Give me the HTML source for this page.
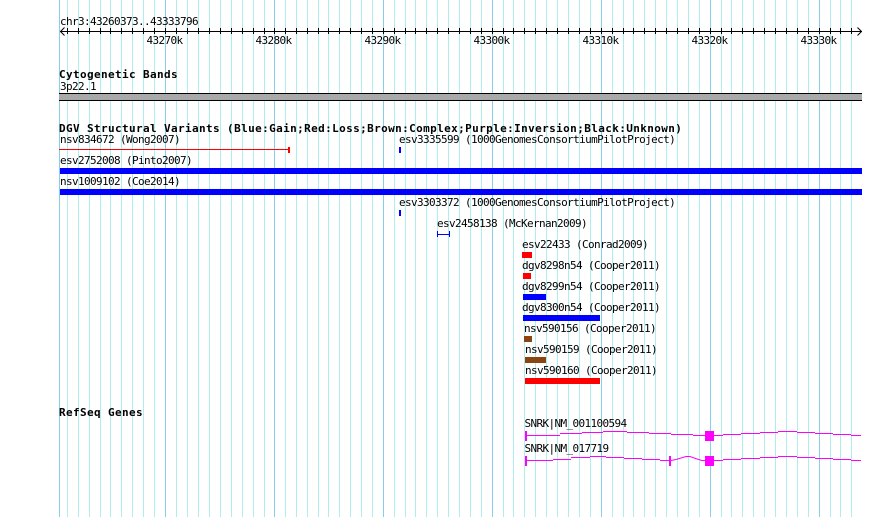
<!DOCTYPE html>
<html><head><meta charset="utf-8"><title>GBrowse</title>
<style>
html,body{margin:0;padding:0;background:#fff;width:890px;height:517px;overflow:hidden}
svg{display:block}
text{font-family:"DejaVu Sans Mono","Liberation Mono",monospace;font-size:11px;letter-spacing:-0.62px;fill:#000;white-space:pre}
text.b{font-weight:bold;letter-spacing:0.38px}
</style></head><body>
<svg width="890" height="517" viewBox="0 0 890 517" xmlns="http://www.w3.org/2000/svg">
<g shape-rendering="crispEdges" fill="none">
<path stroke="#afeeee" d="M67.5 0V517M78.5 0V517M89.5 0V517M100.5 0V517M110.5 0V517M121.5 0V517M132.5 0V517M143.5 0V517M154.5 0V517M176.5 0V517M187.5 0V517M198.5 0V517M209.5 0V517M220.5 0V517M231.5 0V517M242.5 0V517M253.5 0V517M264.5 0V517M285.5 0V517M296.5 0V517M307.5 0V517M318.5 0V517M328.5 0V517M339.5 0V517M350.5 0V517M361.5 0V517M372.5 0V517M394.5 0V517M405.5 0V517M415.5 0V517M426.5 0V517M437.5 0V517M448.5 0V517M459.5 0V517M470.5 0V517M481.5 0V517M503.5 0V517M513.5 0V517M524.5 0V517M535.5 0V517M546.5 0V517M557.5 0V517M568.5 0V517M579.5 0V517M590.5 0V517M612.5 0V517M623.5 0V517M633.5 0V517M644.5 0V517M655.5 0V517M666.5 0V517M677.5 0V517M688.5 0V517M699.5 0V517M721.5 0V517M731.5 0V517M742.5 0V517M753.5 0V517M764.5 0V517M775.5 0V517M786.5 0V517M797.5 0V517M808.5 0V517M830.5 0V517M840.5 0V517M851.5 0V517"/>
<path stroke="#87ceeb" d="M59.5 0V517M165.5 0V517M274.5 0V517M383.5 0V517M492.5 0V517M601.5 0V517M710.5 0V517M819.5 0V517"/>
<!-- ruler -->
<path stroke="#000" d="M60 31.5H862M67.5 28V34M78.5 28V34M89.5 28V34M100.5 28V34M110.5 28V34M121.5 28V34M132.5 28V34M143.5 28V34M154.5 28V34M165.5 28V34M176.5 28V34M187.5 28V34M198.5 28V34M209.5 28V34M220.5 28V34M231.5 28V34M242.5 28V34M253.5 28V34M264.5 28V34M274.5 28V34M285.5 28V34M296.5 28V34M307.5 28V34M318.5 28V34M328.5 28V34M339.5 28V34M350.5 28V34M361.5 28V34M372.5 28V34M383.5 28V34M394.5 28V34M405.5 28V34M415.5 28V34M426.5 28V34M437.5 28V34M448.5 28V34M459.5 28V34M470.5 28V34M481.5 28V34M492.5 28V34M503.5 28V34M513.5 28V34M524.5 28V34M535.5 28V34M546.5 28V34M557.5 28V34M568.5 28V34M579.5 28V34M590.5 28V34M601.5 28V34M612.5 28V34M623.5 28V34M633.5 28V34M644.5 28V34M655.5 28V34M666.5 28V34M677.5 28V34M688.5 28V34M699.5 28V34M710.5 28V34M721.5 28V34M731.5 28V34M742.5 28V34M753.5 28V34M764.5 28V34M775.5 28V34M786.5 28V34M797.5 28V34M808.5 28V34M819.5 28V34M830.5 28V34M840.5 28V34M851.5 28V34"/>
<path stroke="#000" shape-rendering="auto" d="M60.5 31.5L64.5 27.5M60.5 31.5L64.5 35.5M861.5 31.5L857.5 27.5M861.5 31.5L857.5 35.5"/>
</g>
<g shape-rendering="crispEdges">
<!-- cytoband -->
<rect x="59" y="93" width="803" height="8" fill="#a9a9a9"/>
<rect x="59" y="93" width="803" height="1" fill="#000"/>
<rect x="59" y="100" width="803" height="1" fill="#000"/>
<!-- variants -->
<rect x="59" y="149" width="230" height="1" fill="#f00"/>
<rect x="288" y="147" width="2" height="6" fill="#f00"/>
<rect x="399" y="147" width="2" height="6" fill="#00f"/>
<rect x="60" y="168" width="802" height="6" fill="#00f"/>
<rect x="60" y="189" width="802" height="6" fill="#00f"/>
<rect x="399" y="210" width="2" height="6" fill="#00f"/>
<rect x="437" y="231" width="1" height="6" fill="#00f"/>
<rect x="449" y="231" width="1" height="6" fill="#00f"/>
<rect x="437" y="234" width="13" height="1" fill="#00f"/>
<rect x="522" y="252" width="10" height="6" fill="#f00"/>
<rect x="523" y="273" width="8" height="6" fill="#f00"/>
<rect x="523" y="294" width="23" height="6" fill="#00f"/>
<rect x="523" y="315" width="77" height="6" fill="#00f"/>
<rect x="524" y="336" width="8" height="6" fill="#8b4513"/>
<rect x="525" y="357" width="21" height="6" fill="#8b4513"/>
<rect x="525" y="378" width="75" height="6" fill="#f00"/>
<!-- genes -->
<g fill="#f0f">
<rect x="525" y="431" width="2" height="10"/>
<rect x="705" y="431" width="9" height="10"/>
<rect x="527" y="435" width="33" height="1"/><rect x="560" y="433" width="22" height="1"/><rect x="582" y="432" width="21" height="1"/><rect x="603" y="431" width="24" height="1"/><rect x="627" y="432" width="22" height="1"/><rect x="649" y="433" width="22" height="1"/><rect x="671" y="434" width="22" height="1"/><rect x="693" y="435" width="12" height="1"/>
<rect x="714" y="435" width="9" height="1"/><rect x="723" y="434" width="18" height="1"/><rect x="741" y="433" width="19" height="1"/><rect x="760" y="432" width="18" height="1"/><rect x="778" y="431" width="19" height="1"/><rect x="797" y="432" width="18" height="1"/><rect x="815" y="433" width="18" height="1"/><rect x="833" y="434" width="18" height="1"/><rect x="851" y="435" width="10" height="1"/>
<rect x="525" y="456" width="2" height="10"/>
<rect x="669" y="456" width="2" height="10"/>
<rect x="705" y="456" width="9" height="10"/>
<rect x="527" y="460" width="26" height="1"/><rect x="553" y="459" width="18" height="1"/><rect x="571" y="457" width="19" height="1"/><rect x="590" y="456" width="16" height="1"/><rect x="606" y="457" width="18" height="1"/><rect x="624" y="458" width="18" height="1"/><rect x="642" y="459" width="18" height="1"/><rect x="660" y="460" width="9" height="1"/>
<rect x="714" y="460" width="9" height="1"/><rect x="723" y="459" width="18" height="1"/><rect x="741" y="458" width="19" height="1"/><rect x="760" y="457" width="18" height="1"/><rect x="778" y="456" width="19" height="1"/><rect x="797" y="457" width="18" height="1"/><rect x="815" y="458" width="18" height="1"/><rect x="833" y="459" width="18" height="1"/><rect x="851" y="460" width="10" height="1"/>
</g>
</g>
<path fill="none" stroke="#f0f" d="M671 460.5L676 459.5L686 456.5L690 456.5L697 459L702 460.5L705 460.5"/>
<!-- text -->
<text x="60" y="25">chr3:43260373..43333796</text>
<text x="146.5" y="44">43270k</text>
<text x="255.5" y="44">43280k</text>
<text x="364.5" y="44">43290k</text>
<text x="473.5" y="44">43300k</text>
<text x="582.5" y="44">43310k</text>
<text x="691.5" y="44">43320k</text>
<text x="800.5" y="44">43330k</text>
<text class="b" x="59" y="78">Cytogenetic Bands</text>
<text x="60" y="90">3p22.1</text>
<text class="b" x="59" y="132">DGV Structural Variants (Blue:Gain;Red:Loss;Brown:Complex;Purple:Inversion;Black:Unknown)</text>
<text x="60" y="143">nsv834672 (Wong2007)</text>
<text x="399" y="143">esv3335599 (1000GenomesConsortiumPilotProject)</text>
<text x="60" y="164">esv2752008 (Pinto2007)</text>
<text x="60" y="185">nsv1009102 (Coe2014)</text>
<text x="399" y="206">esv3303372 (1000GenomesConsortiumPilotProject)</text>
<text x="437" y="227">esv2458138 (McKernan2009)</text>
<text x="522" y="248">esv22433 (Conrad2009)</text>
<text x="522" y="269">dgv8298n54 (Cooper2011)</text>
<text x="522" y="290">dgv8299n54 (Cooper2011)</text>
<text x="522" y="311">dgv8300n54 (Cooper2011)</text>
<text x="524" y="332">nsv590156 (Cooper2011)</text>
<text x="525" y="353">nsv590159 (Cooper2011)</text>
<text x="525" y="374">nsv590160 (Cooper2011)</text>
<text class="b" x="59" y="416">RefSeq Genes</text>
<text x="524.5" y="427">SNRK|NM_001100594</text>
<text x="524.5" y="452">SNRK|NM_017719</text>
</svg>
</body></html>
